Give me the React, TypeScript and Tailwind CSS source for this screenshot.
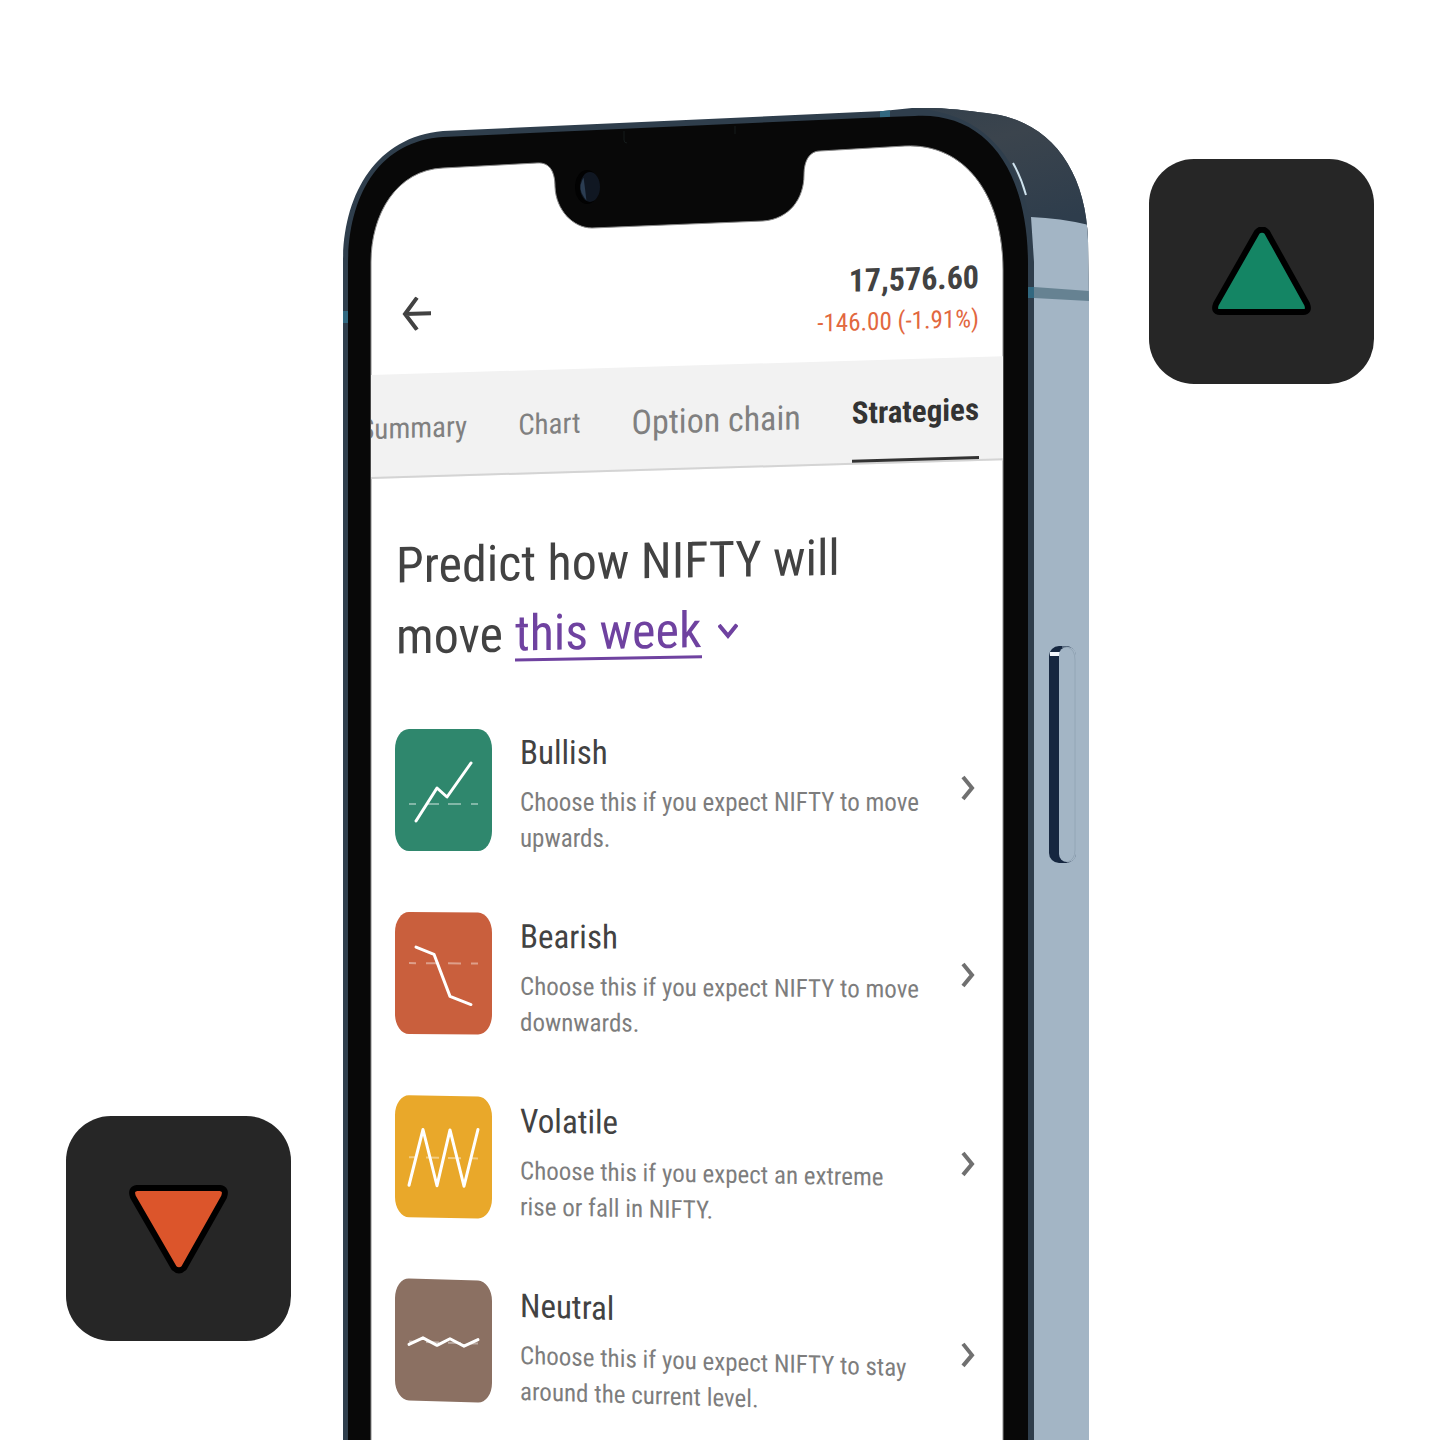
import React from "react";

type Strategy = {
  name: string;
  description: string;
  tile: string;
  slope: string;
  dashY: number;
  line: string;
};

const strategies: Strategy[] = [
  {
    name: "Bullish",
    description: "Choose this if you expect NIFTY to move upwards.",
    tile: "bg-[#2f876d]",
    slope: "skew-y-0",
    dashY: 75,
    line: "M21 92 L42 59 L52 68 L76 34",
  },
  {
    name: "Bearish",
    description: "Choose this if you expect NIFTY to move downwards.",
    tile: "bg-[#c95f3d]",
    slope: "skew-y-[0.4deg]",
    dashY: 51,
    line: "M21 35 L39 42 L55 84 L76 92",
  },
  {
    name: "Volatile",
    description: "Choose this if you expect an extreme rise or fall in NIFTY.",
    tile: "bg-[#e9a82a]",
    slope: "skew-y-1",
    dashY: 62,
    line: "M14 90 L28 34 L42 90 L55 34 L69 90 L83 33",
  },
  {
    name: "Neutral",
    description: "Choose this if you expect NIFTY to stay around the current level.",
    tile: "bg-[#8b7062]",
    slope: "skew-y-[1.8deg]",
    dashY: 63,
    line: "M14 66 L28 59 L42 66 L55 59 L69 66 L83 59",
  },
];

function PhoneBody() {
  return (
    <svg
      className="absolute inset-0 h-full w-full"
      viewBox="343 108 746 1332"
      preserveAspectRatio="xMidYMin slice"
      aria-hidden="true"
    >
      <defs>
        <linearGradient id="corner" x1="0" y1="0" x2="0.4" y2="1">
          <stop offset="0" stopColor="#33404c" />
          <stop offset="0.35" stopColor="#3b444d" />
          <stop offset="1" stopColor="#2e3d4c" />
        </linearGradient>
        <clipPath id="body">
          <path d="M343 1440 V262 C343 197 374 137 443 131 L883 111 L912 108 C945 107 970 111 993 114 C1050 122 1086 170 1088 240 L1089 300 V1440 Z" />
        </clipPath>
      </defs>
      <g clipPath="url(#body)">
        <rect x="343" y="100" width="746" height="1340" fill="#2f3e4c" />
        <path d="M912 108 H1100 V240 H1032 C1026 160 985 112 912 108 Z" fill="url(#corner)" />
        <path d="M1031 217 Q1060 218 1089 225 V1440 H1034 V262 Z" fill="#a3b5c5" />
        <path d="M1034 287 L1089 291 V301 L1034 298 Z" fill="#668292" />
        <path d="M1028 287 H1034 V298 H1028 Z" fill="#316880" />
        <path d="M343 311 H348 V323 H343 Z" fill="#316880" />
        <path d="M880 108 H890 V118 H880 Z" fill="#316880" />
      </g>
      <path d="M1013 163 Q1021 177 1026 195" stroke="#cfe3ee" strokeWidth="2" fill="none" />
      <path
        d="M348 1440 V265 C348 197 378 141 443 137 L730 124 L887 117 L915 116 C985 112 1028 168 1028 265 V1440 Z"
        fill="#080808"
      />
      <path d="M624 131 V140 Q624 143 627 143 M735 126 V134" stroke="#141a1a" fill="none" />
      <ellipse cx="587" cy="187" rx="12" ry="17" fill="#020202" />
      <ellipse cx="590" cy="187" rx="10" ry="15" fill="#101722" />
      <path d="M583 181 Q579 189 585 197 Q584 188 583 181 Z" fill="#2b3d52" stroke="#2b3d52" strokeWidth="2" />
      <path
        d="M371 1445 V262 C371 215 396 170 443 168 L537 163 C550 162 555 172 555 187 C556 210 573 228 592 228 L763 221 C790 219 804 198 804 175 C804 160 810 151 820 151 L905 146 C965 143 1003 195 1003 270 V1445 Z"
        fill="#ffffff"
        stroke="#8a8a8a"
      />
      <rect x="1049" y="646" width="27" height="217" rx="10" fill="#162740" />
      <path d="M1050 656 V652 H1062 V656 Z" fill="#f2f6fb" />
      <rect x="1059" y="647" width="17" height="215" rx="8" fill="#a3b5c5" />
      <path d="M1062 647 H1067 Q1075 649 1075 660 V850 Q1075 860 1067 862" stroke="#93a6b6" fill="none" />
    </svg>
  );
}

function StrategyIcon({ dashY, line }: { dashY: number; line: string }) {
  return (
    <svg viewBox="0 0 97 122" className="h-full w-full" fill="none" aria-hidden="true">
      <path
        d={`M14 ${dashY} H21 M31 ${dashY} H44 M53 ${dashY} H66 M76 ${dashY} H83`}
        stroke="#ffffff"
        strokeOpacity="0.4"
        strokeWidth="2"
      />
      <path d={line} stroke="#ffffff" strokeWidth="3" strokeLinecap="round" strokeLinejoin="round" />
    </svg>
  );
}

function TrendTile({ direction, className }: { direction: "up" | "down"; className: string }) {
  return (
    <div className={`flex h-[225px] w-[225px] shrink-0 items-center justify-center rounded-[45px] bg-[#262626] ${className}`}>
      <svg width="100" height="90" viewBox="0 0 100 90" role="img" aria-label={direction === "up" ? "Up" : "Down"}>
        {direction === "up" ? (
          <path
            d="M45 5 Q50 0 55 5 L95 77 Q98 85 91 85 H8 Q1 85 4 77 Z"
            fill="#148564"
            stroke="#000000"
            strokeWidth="6"
            strokeLinejoin="round"
          />
        ) : (
          <path
            d="M45 84 Q50 89 55 84 L95 13 Q98 5 91 4 H8 Q1 5 4 13 Z"
            fill="#dc552b"
            stroke="#000000"
            strokeWidth="6"
            strokeLinejoin="round"
          />
        )}
      </svg>
    </div>
  );
}

export default function App() {
  return (
    <main className="flex min-h-screen justify-center overflow-hidden bg-white font-['Roboto_Condensed',Roboto,sans-serif] text-[#424242]">
      <TrendTile direction="down" className="mb-[99px] self-end" />

      <section className="relative mt-[108px] mr-[60px] ml-[52px] w-full max-w-[746px] min-w-0">
        <PhoneBody />
        <div className="relative mr-[86px] ml-[28px] overflow-hidden pb-4">
          <header className="flex origin-left -skew-y-[1.7deg] items-center justify-between pt-[167px] pr-6 pb-4 pl-[31px]">
            <button type="button" aria-label="Back" className="pb-1">
              <svg width="29" height="34" viewBox="0 0 29 34" fill="none" stroke="#424242" strokeWidth="4">
                <path d="M29 17 H3 M15 1 L3 17 L15 33" />
              </svg>
            </button>
            <div className="text-right">
              <p className="text-[32px] leading-[40px] font-bold">17,576.60</p>
              <p className="text-[25px] leading-[44px] text-[#e2683f]">-146.00 (-1.91%)</p>
            </div>
          </header>

          <nav
            role="tablist"
            className="flex h-[104px] origin-left -skew-y-[1.7deg] justify-end gap-[51px] border-b-2 border-[#d4d4d4] bg-[#f2f2f2] pr-6 text-[29px] whitespace-nowrap text-[#808080]"
          >
            <button type="button" role="tab" aria-selected="false" className="pt-2">Summary</button>
            <button type="button" role="tab" aria-selected="false" className="pt-2">Chart</button>
            <button type="button" role="tab" aria-selected="false" className="pt-2 text-[34px]">Option chain</button>
            <button type="button" role="tab" aria-selected="true" className="border-b-3 border-[#333333] pt-2 text-[31px] font-bold text-[#333333]">
              Strategies
            </button>
          </nav>

          <h1 className="origin-left -skew-y-1 pt-[52px] pl-[25px] text-[50px] leading-[71px]">
            Predict how NIFTY will
            <span className="flex items-center">
              <label htmlFor="period">move</label>
              <select
                id="period"
                className="ml-3 h-[52px] appearance-none border-b-3 border-[#6f42a0] bg-transparent leading-[48px] text-[#6f42a0]"
              >
                <option>this week</option>
              </select>
              <svg className="ml-4" width="20" height="16" viewBox="0 0 20 16" fill="none" stroke="#6f42a0" strokeWidth="4" aria-hidden="true">
                <path d="M1 1 L10 12 L19 1" />
              </svg>
            </span>
          </h1>

          <ul className="mt-[56px] flex flex-col gap-[55px] pr-7 pl-6">
            {strategies.map((s) => (
              <li key={s.name} className={`origin-left ${s.slope}`}>
                <button type="button" className="flex w-full items-start text-left">
                  <span className={`block h-[122px] w-[97px] shrink-0 rounded-[14px/20px] ${s.tile}`}>
                    <StrategyIcon dashY={s.dashY} line={s.line} />
                  </span>
                  <span className="ml-7 w-[402px]">
                    <span className="mb-2 block text-[33px] leading-[48px]">{s.name}</span>
                    <span className="block text-[25px] leading-[36px] text-[#7d7d7d]">{s.description}</span>
                  </span>
                  <svg className="mt-[46px] ml-auto" width="14" height="26" viewBox="0 0 14 26" fill="none" stroke="#707070" strokeWidth="4" aria-hidden="true">
                    <path d="M2 2 L11 13 L2 24" />
                  </svg>
                </button>
              </li>
            ))}
          </ul>
        </div>
      </section>

      <TrendTile direction="up" className="mt-[159px]" />
    </main>
  );
}
